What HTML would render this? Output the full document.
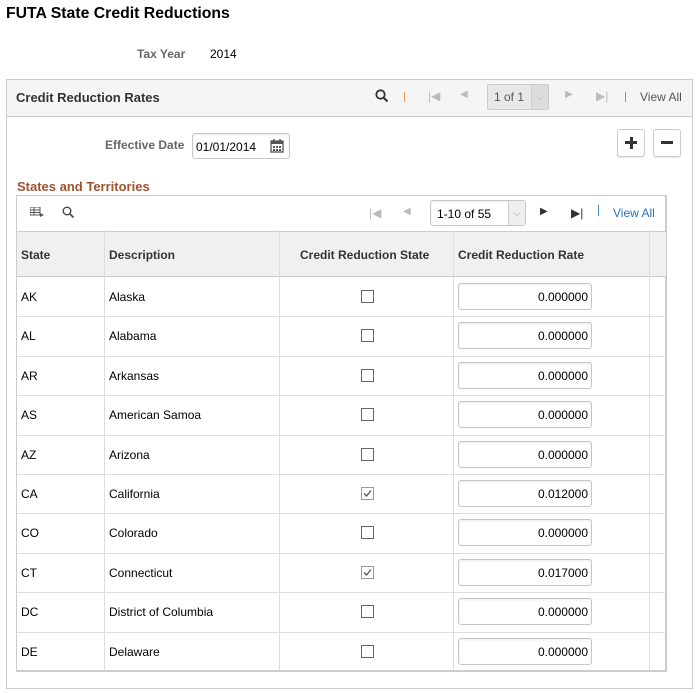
<!DOCTYPE html><html><head><style>
*{box-sizing:border-box;margin:0;padding:0}
body{width:699px;height:693px;background:#fff;font-family:"Liberation Sans",Arial,sans-serif;font-size:12px;color:#000;position:relative;overflow:hidden}
.a{position:absolute}
.lbl{color:#666;font-weight:bold}
.hdr{font-weight:bold;color:#333}
.inp{position:absolute;background:#fff;border:1px solid #c6c6c6;border-radius:3px;box-shadow:inset 0 1px 2px rgba(0,0,0,.08)}
.cb{position:absolute;width:13px;height:13px;border:1px solid #666;background:#fff}
.vl{position:absolute;width:1px;background:#ddd}
.hl{position:absolute;height:1px;background:#ddd}
.btn{position:absolute;width:28px;height:28px;border:1px solid #ccc;border-radius:3px;background:#fff;box-shadow:0 1px 1px rgba(0,0,0,.1)}
.g{color:#bbb}
</style></head><body>
<div class="a" style="left:6px;top:5px;font-size:15.8px;font-weight:bold;color:#000">FUTA State Credit Reductions</div>
<div class="a lbl" style="left:137px;top:47px">Tax Year</div>
<div class="a" style="left:210px;top:47px">2014</div>

<div class="a" style="left:6px;top:79px;width:687px;height:610px;border:1px solid #ccc"></div>
<div class="a" style="left:7px;top:80px;width:685px;height:37px;background:#f5f5f5;border-bottom:1px solid #ccc"></div>
<div class="a hdr" style="left:16px;top:90px;font-size:13px">Credit Reduction Rates</div>
<svg class="a" style="left:375px;top:89px" width="14" height="14"><circle cx="5.5" cy="5.5" r="4.2" fill="none" stroke="#333" stroke-width="1.8"/><line x1="8.5" y1="8.5" x2="12.5" y2="12.5" stroke="#333" stroke-width="2"/></svg>
<div class="a" style="left:404px;top:92px;width:1px;height:10px;background:#e0a040"></div>
<div class="a g" style="left:428px;top:89px">|◀</div>
<div class="a g" style="left:460px;top:89px;font-size:10px">◀</div>
<div class="a" style="left:487px;top:84px;width:62px;height:26px;background:#e8e8e8;border:1px solid #ccc;border-radius:2px"></div>
<div class="a" style="left:494px;top:90px;color:#555">1 of 1</div>
<div class="a" style="left:531px;top:85px;width:17px;height:24px;background:#ddd;border-left:1px solid #ccc;color:#aaa;text-align:center;font-size:9px;line-height:24px">⌵</div>
<div class="a g" style="left:565px;top:89px;font-size:10px">▶</div>
<div class="a g" style="left:596px;top:89px">▶|</div>
<div class="a" style="left:625px;top:92px;width:1px;height:10px;background:#999"></div>
<div class="a" style="left:640px;top:90px;color:#555">View All</div>

<div class="a lbl" style="left:105px;top:138px">Effective Date</div>
<div class="inp" style="left:192px;top:133px;width:98px;height:26px"></div>
<div class="a" style="left:196px;top:140px">01/01/2014</div>
<svg class="a" style="left:270px;top:138px" width="14" height="15"><rect x="1" y="3" width="12" height="11" fill="none" stroke="#555" stroke-width="1.3"/><rect x="1" y="3" width="12" height="3" fill="#555"/><line x1="4" y1="1" x2="4" y2="4" stroke="#555" stroke-width="1.5"/><line x1="10" y1="1" x2="10" y2="4" stroke="#555" stroke-width="1.5"/><g fill="#555"><rect x="3" y="8" width="2" height="2"/><rect x="6" y="8" width="2" height="2"/><rect x="9" y="8" width="2" height="2"/><rect x="3" y="11" width="2" height="2"/><rect x="6" y="11" width="2" height="2"/><rect x="9" y="11" width="2" height="2"/></g></svg>
<div class="btn" style="left:617px;top:129px"></div>
<div class="a" style="left:625px;top:141px;width:12px;height:3px;background:#333"></div>
<div class="a" style="left:629.5px;top:136.5px;width:3px;height:12px;background:#333"></div>
<div class="btn" style="left:653px;top:129px"></div>
<div class="a" style="left:661px;top:141px;width:12px;height:3px;background:#333"></div>

<div class="a" style="left:17px;top:179px;font-weight:bold;color:#a0522d;font-size:13px">States and Territories</div>
<div class="a" style="left:16px;top:195px;width:651px;height:477px;border:1px solid #ccc;border-right:2px solid #ccc;border-bottom:2px solid #ccc"></div>
<svg class="a" style="left:30px;top:207px" width="14" height="11"><rect x="0" y="0" width="10" height="8" fill="none" stroke="#555" stroke-width="1"/><line x1="0" y1="3" x2="10" y2="3" stroke="#555"/><line x1="0" y1="5.5" x2="10" y2="5.5" stroke="#555"/><line x1="4" y1="0" x2="4" y2="8" stroke="#555"/><path d="M10 6 L14 8 L10 10Z" fill="#555"/></svg>
<svg class="a" style="left:62px;top:206px" width="13" height="13"><circle cx="5" cy="5" r="3.8" fill="none" stroke="#444" stroke-width="1.4"/><line x1="8" y1="8" x2="11.5" y2="11.5" stroke="#444" stroke-width="1.6"/></svg>
<div class="a g" style="left:369px;top:206px">|◀</div>
<div class="a g" style="left:403px;top:206px;font-size:10px">◀</div>
<div class="inp" style="left:430px;top:200px;width:96px;height:26px"></div>
<div class="a" style="left:437px;top:207px">1-10 of 55</div>
<div class="a" style="left:508px;top:201px;width:17px;height:24px;background:#eee;border-left:1px solid #ccc;color:#888;text-align:center;font-size:9px;line-height:24px">⌵</div>
<div class="a" style="left:540px;top:206px;font-size:10px;color:#333">▶</div>
<div class="a" style="left:571px;top:206px;color:#333">▶|</div>
<div class="a" style="left:598px;top:205px;width:1px;height:11px;background:#4a8bc8"></div>
<div class="a" style="left:613px;top:206px;color:#2c71b8">View All</div>

<div class="a" style="left:17px;top:231px;width:649px;height:46px;background:#f0f0f0;border-top:1px solid #ccc;border-bottom:1px solid #ccc"></div>
<div class="a hdr" style="left:21px;top:248px">State</div>
<div class="a hdr" style="left:109px;top:248px">Description</div>
<div class="a hdr" style="left:300px;top:248px">Credit Reduction State</div>
<div class="a hdr" style="left:458px;top:248px">Credit Reduction Rate</div>

<div class="vl" style="left:104px;top:231px;height:440px"></div>
<div class="vl" style="left:279px;top:231px;height:440px"></div>
<div class="vl" style="left:453px;top:231px;height:440px"></div>
<div class="vl" style="left:649px;top:231px;height:440px"></div>

<div id="rows"></div>
<script>
var d=[["AK","Alaska",0,"0.000000"],["AL","Alabama",0,"0.000000"],["AR","Arkansas",0,"0.000000"],["AS","American Samoa",0,"0.000000"],["AZ","Arizona",0,"0.000000"],["CA","California",1,"0.012000"],["CO","Colorado",0,"0.000000"],["CT","Connecticut",1,"0.017000"],["DC","District of Columbia",0,"0.000000"],["DE","Delaware",0,"0.000000"]];
var h="";
for(var i=0;i<10;i++){var t=277+i*39.4;var r=d[i];
if(i>0)h+='<div class="hl" style="left:17px;top:'+t+'px;width:649px"></div>';
h+='<div class="a" style="left:21px;top:'+(t+13)+'px">'+r[0]+'</div>';
h+='<div class="a" style="left:109px;top:'+(t+13)+'px">'+r[1]+'</div>';
h+='<div class="cb" style="left:361px;top:'+(t+13)+'px;border-color:'+(r[2]?'#999':'#666')+'">'+(r[2]?'<svg width="11" height="11" style="position:absolute;left:0;top:0"><path d="M2 5.5 L4.5 8 L9 2.5" fill="none" stroke="#555" stroke-width="1.3"/></svg>':'')+'</div>';
h+='<div class="inp" style="left:458px;top:'+(t+6)+'px;width:134px;height:27px"></div>';
h+='<div class="a" style="left:458px;width:130px;text-align:right;top:'+(t+13)+'px">'+r[3]+'</div>';}
document.getElementById("rows").innerHTML=h;
</script>
</body></html>
